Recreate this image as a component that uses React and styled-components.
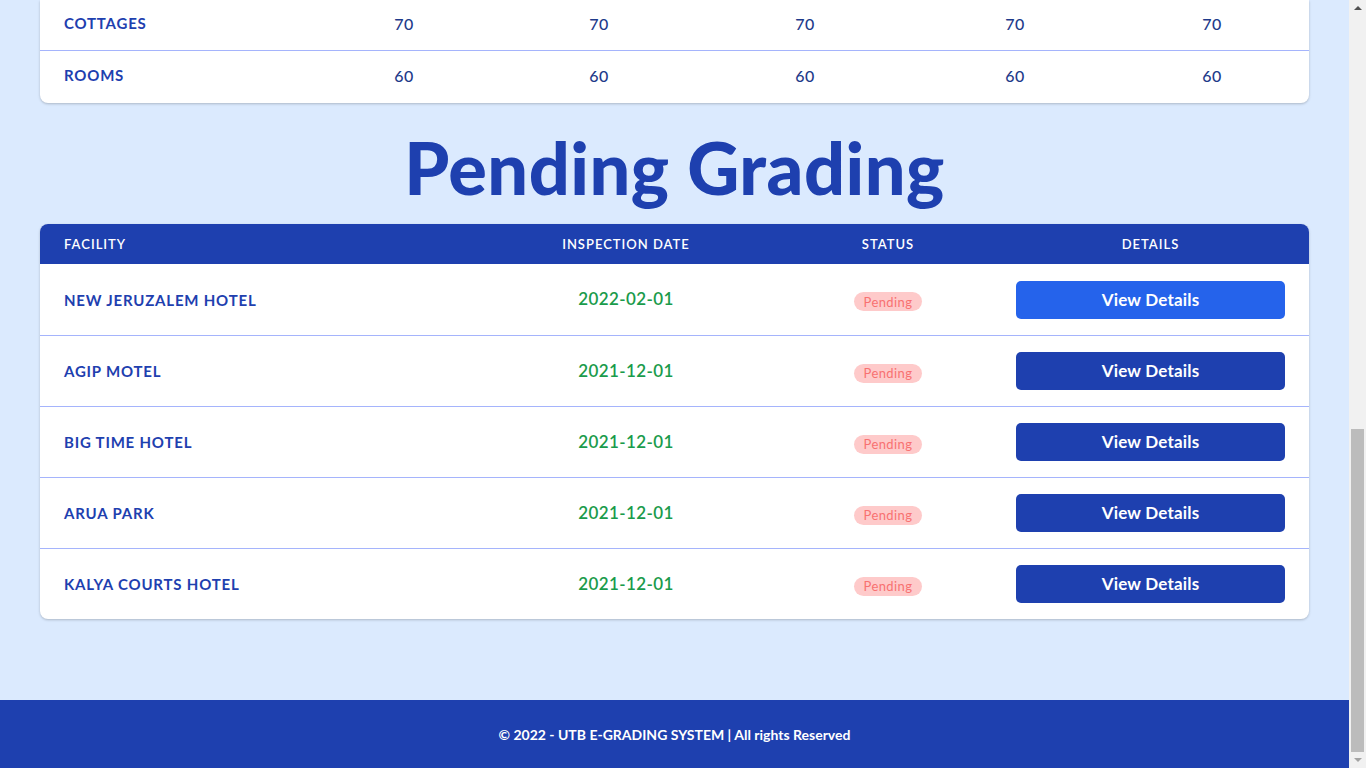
import React from 'react';
import styled, { createGlobalStyle } from 'styled-components';

const GlobalStyle = createGlobalStyle`
  body {
    margin: 0;
    padding-right: 17px;
    background: #dbeafe;
    font-family: 'Lato', 'Noto Sans', sans-serif;
    color: #1e40af;
  }
  * {
    box-sizing: border-box;
  }
`;

const Page = styled.div`
  min-height: 100vh;
  display: flex;
  flex-direction: column;
`;

const Main = styled.main`
  flex: 1;
  padding: 0 40px 81px;
`;

const Card = styled.div`
  background: #ffffff;
  border-radius: ${({ cut }) => (cut ? '0 0 8px 8px' : '8px')};
  box-shadow: 0 1px 3px rgba(0, 0, 0, 0.15), 0 1px 2px rgba(0, 0, 0, 0.08);
  overflow: hidden;
`;

const capacityCols = '265px 198px 192px 220px 200px 194px';
const pendingCols = '428px 316px 208px 317px';

const CapacityRow = styled.div`
  display: grid;
  grid-template-columns: ${capacityCols};
  align-items: center;
  height: ${({ first }) => (first ? '50px' : '53px')};
  padding-bottom: 4px;
  border-top: ${({ first }) => (first ? 'none' : '1px solid #a5b4fc')};
`;

const LabelCell = styled.div`
  padding-left: 24px;
  font-weight: 700;
  font-size: 15px;
  letter-spacing: 0.8px;
  text-transform: uppercase;
  color: #1e40af;
`;

const NumCell = styled.div`
  text-align: center;
  font-size: 16px;
  font-weight: 500;
  letter-spacing: 0.5px;
  color: #1e3a8a;
`;

const Title = styled.h1`
  margin: 0;
  padding: 28px 0 21px;
  text-align: center;
  font-size: 72px;
  line-height: 72px;
  font-weight: 900;
  letter-spacing: 0.5px;
  color: #1e40af;
`;

const HeadRow = styled.div`
  display: grid;
  grid-template-columns: ${pendingCols};
  align-items: center;
  height: 40px;
  background: #1e40af;
`;

const HeadCell = styled.div`
  color: #ffffff;
  font-size: 13px;
  font-weight: 600;
  letter-spacing: 1px;
  text-transform: uppercase;
  text-align: ${({ left }) => (left ? 'left' : 'center')};
  padding-left: ${({ left }) => (left ? '24px' : '0')};
`;

const BodyRow = styled.div`
  display: grid;
  grid-template-columns: ${pendingCols};
  align-items: center;
  height: 71px;
  border-top: ${({ first }) => (first ? 'none' : '1px solid #a5b4fc')};
`;

const DateCell = styled.div`
  text-align: center;
  font-size: 17px;
  font-weight: 600;
  letter-spacing: 0.4px;
  color: #1a9b4b;
  padding-bottom: 2px;
`;

const StatusCell = styled.div`
  display: flex;
  justify-content: center;
  padding-top: 4px;
`;

const Badge = styled.span`
  display: inline-flex;
  align-items: center;
  justify-content: center;
  width: 68px;
  height: 19px;
  border-radius: 999px;
  background: #fecaca;
  color: #f87171;
  font-size: 13px;
  letter-spacing: 0.4px;
`;

const ButtonCell = styled.div`
  padding: 0 24px;
`;

const ViewButton = styled.button`
  width: 100%;
  height: 38px;
  border: none;
  border-radius: 5px;
  background: ${({ active }) => (active ? '#2563eb' : '#1e40af')};
  color: #ffffff;
  font-family: inherit;
  font-size: 17px;
  font-weight: 700;
  letter-spacing: 0.2px;
  cursor: pointer;
  padding-bottom: 2px;
`;

const Footer = styled.footer`
  height: 68px;
  background: #1e40af;
  display: flex;
  align-items: center;
  justify-content: center;
  color: #ffffff;
  font-family: 'Lato', sans-serif;
  font-weight: 700;
  font-size: 14px;
`;

/* stand-in for the browser's scrollbar seen in the screenshot */
const Scrollbar = styled.div`
  position: fixed;
  top: 0;
  right: 0;
  width: 17px;
  height: 100vh;
  background: #f1f1f1;
  display: flex;
  flex-direction: column;
  align-items: center;
  justify-content: space-between;
`;

const Arrow = styled.div`
  width: 0;
  height: 0;
  margin: 6px 0;
  border-left: 4px solid transparent;
  border-right: 4px solid transparent;
  ${({ down }) =>
    down ? 'border-top: 4px solid #a3a3a3;' : 'border-bottom: 4px solid #505050;'}
`;

const Track = styled.div`
  flex: 1;
  width: 100%;
  display: flex;
  flex-direction: column;
  justify-content: flex-end;
  align-items: center;
`;

const Thumb = styled.div`
  width: 13px;
  height: 323px;
  background: #bcbcbc;
`;

const capacity = [
  { label: 'Cottages', values: [70, 70, 70, 70, 70] },
  { label: 'Rooms', values: [60, 60, 60, 60, 60] },
];

const pending = [
  { name: 'New Jeruzalem Hotel', date: '2022-02-01' },
  { name: 'Agip Motel', date: '2021-12-01' },
  { name: 'Big Time Hotel', date: '2021-12-01' },
  { name: 'Arua Park', date: '2021-12-01' },
  { name: 'Kalya Courts Hotel', date: '2021-12-01' },
];

export default function App() {
  return (
    <Page>
      <GlobalStyle />
      <Main>
        <Card cut>
          {capacity.map((row, i) => (
            <CapacityRow key={row.label} first={i === 0}>
              <LabelCell>{row.label}</LabelCell>
              {row.values.map((v, j) => (
                <NumCell key={j}>{v}</NumCell>
              ))}
            </CapacityRow>
          ))}
        </Card>

        <Title>Pending Grading</Title>

        <Card>
          <HeadRow>
            <HeadCell left>Facility</HeadCell>
            <HeadCell>Inspection Date</HeadCell>
            <HeadCell>Status</HeadCell>
            <HeadCell>Details</HeadCell>
          </HeadRow>
          {pending.map((p, i) => (
            <BodyRow key={p.name} first={i === 0}>
              <LabelCell>{p.name}</LabelCell>
              <DateCell>{p.date}</DateCell>
              <StatusCell>
                <Badge>Pending</Badge>
              </StatusCell>
              <ButtonCell>
                <ViewButton active={i === 0}>View Details</ViewButton>
              </ButtonCell>
            </BodyRow>
          ))}
        </Card>
      </Main>
      <Footer>© 2022 - UTB E-GRADING SYSTEM | All rights Reserved</Footer>
      <Scrollbar>
        <Arrow />
        <Track>
          <Thumb />
        </Track>
        <Arrow down />
      </Scrollbar>
    </Page>
  );
}
